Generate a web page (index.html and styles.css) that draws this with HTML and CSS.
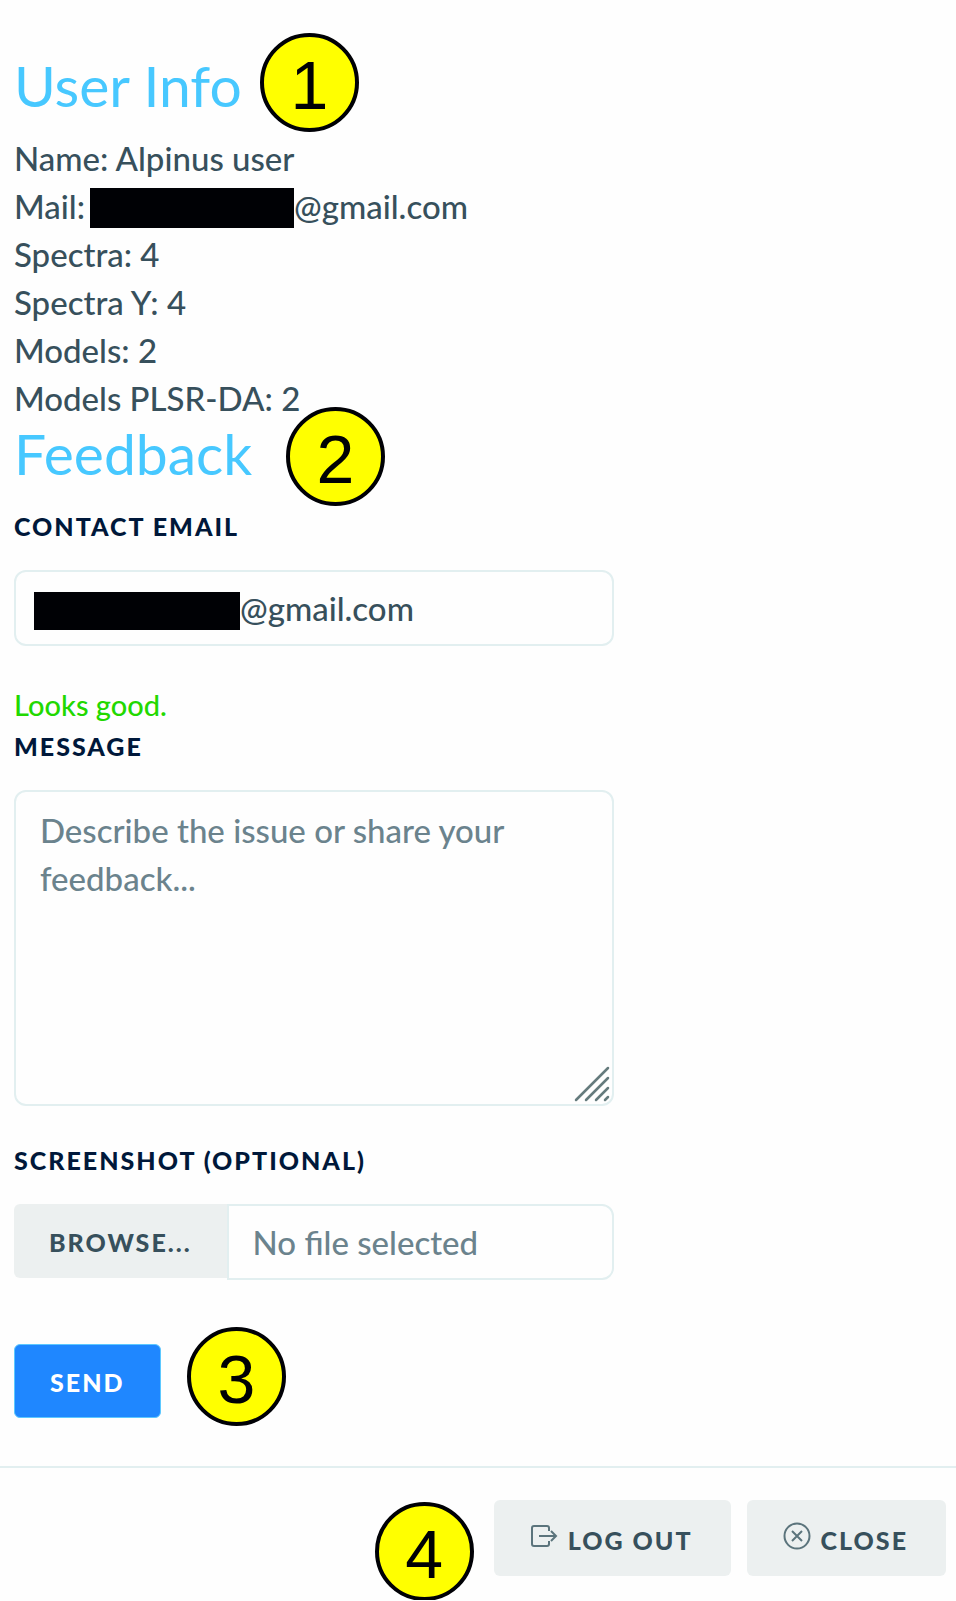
FILE: index.html
```html
<!DOCTYPE html>
<html lang="en">
<head>
    <meta charset="UTF-8">
    <meta name="viewport" content="width=device-width, initial-scale=1.0">
    <title>User Info</title>
    <link rel="stylesheet" href="styles.css">
</head>
<body>
    <div class="modal">
        <div class="modal-body">
            <!-- User info -->
            <section class="user-info">
                <h2>User Info</h2>
                <span class="callout callout-info">1</span>
                <p>Name: Alpinus user</p>
                <p class="mail-row">Mail: <span class="redacted"></span>@gmail.com</p>
                <p>Spectra: 4</p>
                <p>Spectra Y: 4</p>
                <p>Models: 2</p>
                <p>Models PLSR-DA: 2</p>
            </section>

            <!-- Feedback form -->
            <section class="feedback">
                <h2>Feedback</h2>
                <span class="callout callout-feedback">2</span>
                <form>
                    <label class="field-label" for="email">Contact email</label>
                    <div class="email-field">
                        <input class="control" type="text" id="email" value="@gmail.com">
                        <span class="redacted"></span>
                    </div>
                    <div class="valid-feedback">Looks good.</div>

                    <label class="field-label" for="message">Message</label>
                    <div class="message-field">
                        <textarea class="control" id="message" placeholder="Describe the issue or share your feedback..."></textarea>
                        <svg class="grip" viewBox="0 0 36 36" aria-hidden="true">
                            <path d="M2 34L34 2M12 34L34 12M22 34L34 22M31 34L34 31"/>
                        </svg>
                    </div>

                    <label class="field-label" for="screenshot">Screenshot (optional)</label>
                    <div class="file-field">
                        <span class="file-browse">Browse...</span>
                        <span class="file-name">No file selected</span>
                        <input type="file" id="screenshot">
                    </div>

                    <div class="send-row">
                        <button type="button" class="btn btn-primary">Send</button>
                        <span class="callout callout-send">3</span>
                    </div>
                </form>
            </section>
        </div>

        <div class="modal-footer">
            <div class="logout">
                <span class="callout callout-logout">4</span>
                <button type="button" class="btn btn-light">
                    <svg class="icon" viewBox="0 0 28 28" aria-hidden="true">
                        <path d="M19 9V6a2 2 0 0 0-2-2H4a2 2 0 0 0-2 2v16a2 2 0 0 0 2 2h13a2 2 0 0 0 2-2v-3M9 14h17M21 9l5 5-5 5"/>
                    </svg>
                    Log out
                </button>
            </div>
            <button type="button" class="btn btn-light">
                <svg class="icon" viewBox="0 0 28 28" aria-hidden="true">
                    <circle cx="14" cy="14" r="12.5"/>
                    <path d="M9 9l10 10M19 9L9 19"/>
                </svg>
                Close
            </button>
        </div>
    </div>
</body>
</html>
```

FILE: styles.css
```css
* {
    margin: 0;
    padding: 0;
    box-sizing: border-box;
}

body {
    background: #fefefe;
    color: #37505c;
    font-family: Lato, "Liberation Sans", sans-serif;
    font-size: 33px;
    line-height: 48px;
    font-weight: 500;
}

.modal-body {
    padding: 54px 14px 48px;
}

.user-info,
.feedback,
.send-row,
.logout {
    position: relative;
}

h2 {
    color: #47c8ff;
    font-size: 57px;
    line-height: 62px;
    font-weight: 400;
}

.user-info h2 {
    margin-bottom: 18px;
}

.redacted {
    background: #000105;
}

/* mail address */
.mail-row {
    display: flex;
    align-items: center;
}

.mail-row .redacted {
    width: 204px;
    height: 40px;
    margin: 4px 0 0 5px;
}

/* form */
form {
    max-width: 600px;
}

.field-label {
    display: block;
    margin-bottom: 24px;
    color: #00183a;
    font-size: 25px;
    line-height: 40px;
    font-weight: 900;
    letter-spacing: 2px;
    text-transform: uppercase;
}

.feedback h2 {
    margin-bottom: 22px;
}

.control {
    display: block;
    width: 100%;
    border: 2px solid #e2eff0;
    border-radius: 12px;
    background: transparent;
    color: inherit;
    font: inherit;
}

.email-field,
.message-field,
.file-field {
    position: relative;
}

.email-field .control {
    height: 76px;
    padding: 0 24px 0 224px;
}

.email-field .redacted {
    position: absolute;
    top: 22px;
    left: 20px;
    width: 206px;
    height: 38px;
}

.valid-feedback {
    margin-top: 38px;
    color: #22d800;
    font-size: 29px;
    line-height: 42px;
}

.message-field {
    margin-bottom: 34px;
}

.message-field .control {
    height: 316px;
    padding: 14px 24px;
    resize: none;
}

.control::placeholder {
    color: #6b838d;
    opacity: 1;
}

.grip {
    position: absolute;
    right: 4px;
    bottom: 4px;
    width: 36px;
    height: 36px;
    fill: none;
    stroke: #657b7d;
    stroke-width: 2.5;
    stroke-linecap: round;
}

/* file picker */
.file-field {
    display: flex;
    height: 76px;
    line-height: 76px;
}

.file-browse {
    height: 74px;
    padding: 0 35px;
    border-radius: 6px 0 0 6px;
    background: #ecf0f0;
    font-size: 25px;
    font-weight: 900;
    letter-spacing: 2px;
    text-transform: uppercase;
}

.file-name {
    flex: 1;
    padding-left: 24px;
    border: 2px solid #e2eff0;
    border-radius: 0 12px 12px 0;
    color: #6b838d;
    line-height: 72px;
}

.file-field input {
    position: absolute;
    inset: 0;
    width: 100%;
    opacity: 0;
    cursor: pointer;
}

/* buttons */
.btn {
    display: flex;
    align-items: center;
    gap: 10px;
    height: 76px;
    padding: 4px 36px 0;
    border: none;
    border-radius: 6px;
    color: inherit;
    font: inherit;
    font-size: 25px;
    font-weight: 900;
    letter-spacing: 2px;
    text-transform: uppercase;
    cursor: pointer;
}

.btn-primary {
    height: 74px;
    padding: 2px 35px 0;
    border: 1px solid #5cc8ff;
    background: #1f87ff;
    color: #fff;
}

.btn-light {
    padding-right: 38px;
    background: #ecf0f0;
}

.icon {
    width: 28px;
    height: 28px;
    margin-top: -8px;
    fill: none;
    stroke: #5b747c;
    stroke-width: 2;
}

.send-row {
    margin-top: 64px;
}

.modal-footer {
    display: flex;
    justify-content: flex-end;
    gap: 16px;
    padding: 32px 10px 24px;
    border-top: 2px solid #e2eff0;
}

/* numbered markers */
.callout {
    position: absolute;
    width: 99px;
    height: 99px;
    padding-top: 3px;
    border: 4px solid #000105;
    border-radius: 50%;
    background: #ff0;
    color: #000105;
    font-family: "Liberation Sans", Arial, sans-serif;
    font-size: 68px;
    font-weight: 400;
    line-height: 91px;
    text-align: center;
}

.callout-info {
    top: -21px;
    left: 246px;
}

.callout-feedback {
    top: -15px;
    left: 272px;
}

.callout-send {
    top: -17px;
    left: 173px;
}

.callout-logout {
    top: 2px;
    right: calc(100% + 20px);
}
```
